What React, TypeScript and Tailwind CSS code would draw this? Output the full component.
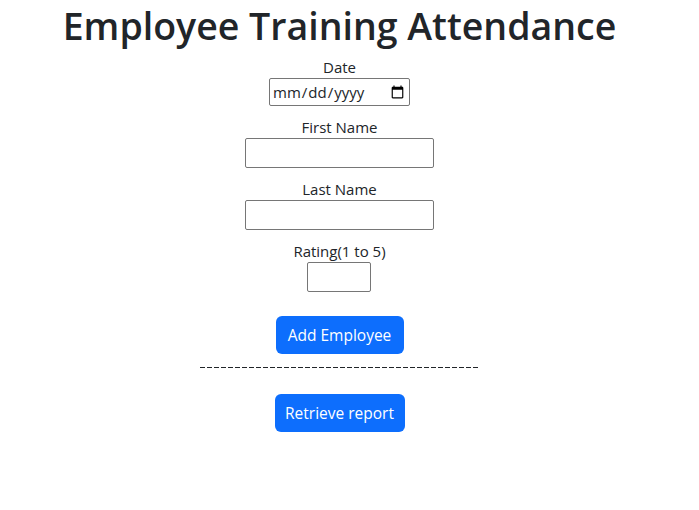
export default function App() {
  const fields = [
    { label: 'First Name', width: 'w-[189px]' },
    { label: 'Last Name', width: 'w-[189px]' },
    { label: 'Rating(1 to 5)', width: 'w-[64px]' },
  ];

  return (
    <div className="w-[679px] min-h-[510px] bg-white text-[#212529] font-['Open_Sans',sans-serif] flex flex-col items-center">
      <h1 className="text-[37.5px] leading-[52px] font-semibold mb-1 whitespace-nowrap">Employee Training Attendance</h1>

      <div className="flex flex-col items-center mb-[10px]">
        <label className="text-[15px] leading-[22px]">Date</label>
        <input
          type="date"
          className="w-[141px] h-[28px] border border-[#767676] rounded-[2px] px-[2px] text-[15px] font-['Open_Sans',sans-serif]"
        />
      </div>

      {fields.map(f => (
        <div key={f.label} className="flex flex-col items-center mb-[10px]">
          <label className="text-[15px] leading-[22px]">{f.label}</label>
          <input type="text" className={`${f.width} h-[30px] border border-[#767676] rounded-[2px]`} />
        </div>
      ))}

      <button className="mt-[14px] w-[128px] h-[38px] pt-px bg-[#0d6efd] text-white text-[15.5px] rounded-md">
        Add Employee
      </button>

      <div className="mt-[13px] w-[279px] h-px bg-[repeating-linear-gradient(to_right,#212529_0_5px,transparent_5px_7px)]" />

      <button className="mt-[26px] w-[130px] h-[38px] pt-px bg-[#0d6efd] text-white text-[15.5px] rounded-md">
        Retrieve report
      </button>
    </div>
  );
}
